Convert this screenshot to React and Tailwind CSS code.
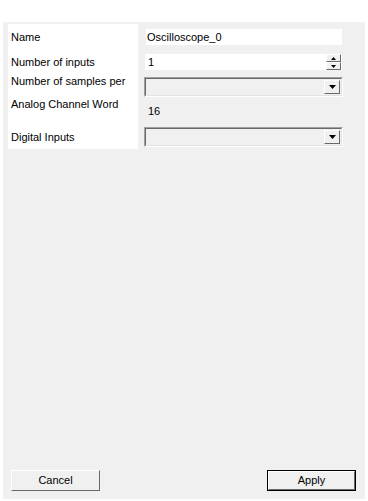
function Combo() {
  return (
    <div className="flex h-[20px] w-[199px] border-t border-l border-t-[#a0a0a0] border-l-[#a0a0a0] border-b border-r border-b-white border-r-white">
      <div className="flex flex-1 border-t border-l border-t-[#696969] border-l-[#696969] border-b border-r border-b-[#e3e3e3] border-r-[#e3e3e3] bg-[#f0f0f0] p-px">
        <div className="flex-1" />
        <div className="flex w-[16px] items-center justify-center border-t border-l border-t-white border-l-white border-b border-r border-b-[#696969] border-r-[#696969] bg-[#f0f0f0]">
          <svg width="7" height="4" viewBox="0 0 7 4">
            <path d="M0 0H7L3.5 4Z" fill="#000" />
          </svg>
        </div>
      </div>
    </div>
  )
}

function SpinBtn({ up }) {
  return (
    <div className="flex h-[8px] w-[15px] items-center justify-center border-t border-l border-t-white border-l-white border-b border-r border-b-[#696969] border-r-[#696969] bg-[#f0f0f0]">
      <svg width="5" height="3" viewBox="0 0 5 3">
        <path d={up ? "M0 3H5L2.5 0Z" : "M0 0H5L2.5 3Z"} fill="#000" />
      </svg>
    </div>
  )
}

export default function App() {
  return (
    <div
      className="h-[501px] w-[368px] bg-white pt-[22px] pl-[3px] text-[11px] text-black"
      style={{ fontFamily: '"Liberation Sans", Arial, sans-serif' }}
    >
      <div className="flex h-[477px] w-[362px] flex-col bg-[#f0f0f0] pt-[2px] pl-[5px]">
        <div className="flex">
          <div className="w-[130px] bg-white pl-[3px]">
            <div className="flex h-[26px] items-center">Name</div>
            <div className="flex h-[24px] items-center">Number of inputs</div>
            <div className="h-[24px] pt-[1px] leading-[13px]">Number of samples per</div>
            <div className="h-[28px] leading-[13px]">Analog Channel Word</div>
            <div className="flex h-[23px] items-center pb-[1px]">Digital Inputs</div>
          </div>
          <div className="flex flex-col pl-[6px]">
            <div className="flex h-[26px] items-center pl-[2px]">
              <div className="flex h-[16px] w-[196px] items-center bg-white pl-[1px]">Oscilloscope_0</div>
            </div>
            <div className="flex h-[24px] items-center pl-[1px]">
              <div className="flex h-[16px] w-[197px] items-center justify-between bg-white pl-[3px] pr-px">
                <span>1</span>
                <div className="flex flex-col">
                  <SpinBtn up />
                  <SpinBtn />
                </div>
              </div>
            </div>
            <div className="h-[24px] pt-[3px]">
              <Combo />
            </div>
            <div className="h-[28px] pt-[7px] pl-[4px] leading-[13px]">16</div>
            <div className="flex h-[23px] items-center pb-[1px]">
              <Combo />
            </div>
          </div>
        </div>
        <div className="flex-1" />
        <div className="flex justify-between pb-[8px] pl-[3px] pr-[9px]">
          <button className="h-[21px] w-[89px] border-t border-l border-t-white border-l-white border-b border-r border-b-[#696969] border-r-[#696969] bg-[#f0f0f0]">
            Cancel
          </button>
          <button className="h-[21px] w-[89px] border border-black">
            <div className="flex h-full w-full items-center justify-center border-t border-l border-t-white border-l-white border-b border-r border-b-[#696969] border-r-[#696969] bg-[#f0f0f0]">
              Apply
            </div>
          </button>
        </div>
      </div>
    </div>
  )
}
